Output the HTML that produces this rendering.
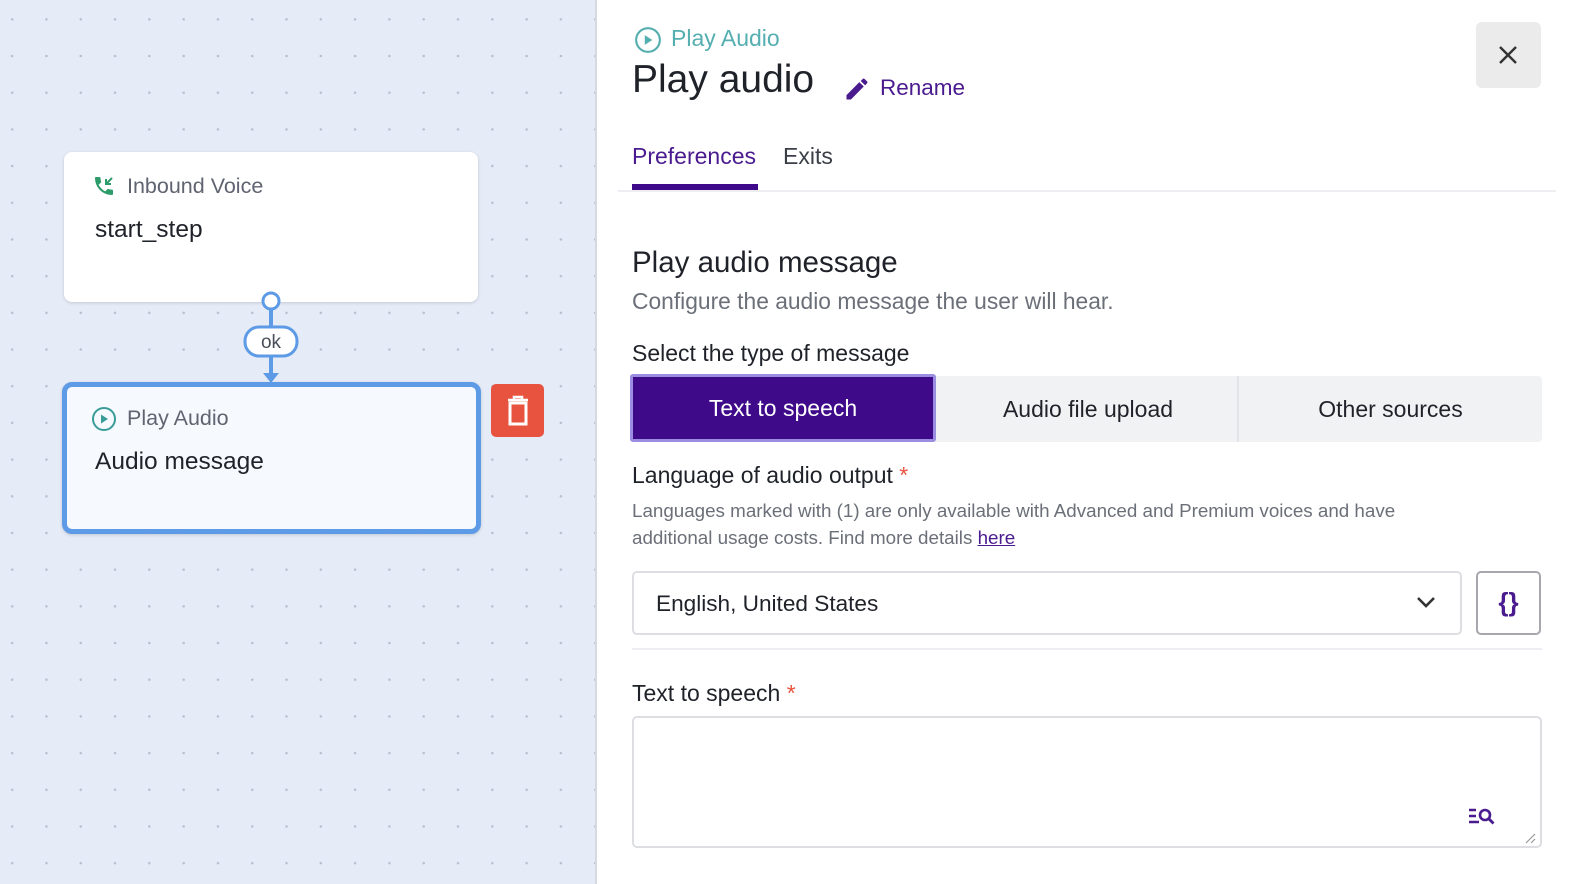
<!DOCTYPE html>
<html><head><meta charset="utf-8"><style>
*{box-sizing:border-box;margin:0;padding:0}
body{width:1584px;height:884px;overflow:hidden;font-family:"Liberation Sans",sans-serif;background:#fff;position:relative}
#canvas{position:absolute;left:0;top:0;width:597px;height:884px;background-color:#e5ebf7;background-image:radial-gradient(circle,#b7bfcf 1.1px,transparent 1.4px);background-size:34.3px 36.7px;background-position:-5px 1px;border-right:2px solid #d5d9e2}
.card{position:absolute;background:#fff;border-radius:8px;box-shadow:0 1px 3px rgba(0,0,0,.15)}
.lbl{position:absolute;font-size:21.5px;color:#5f6470}
.ttl{position:absolute;font-size:24.5px;color:#1f2229}
#panel{position:absolute;left:599px;top:0;right:0;bottom:0}
.abs{position:absolute;white-space:nowrap}
</style></head><body>
<div id="canvas">
  <div class="card" style="left:64px;top:152px;width:414px;height:150px">
    <svg class="abs" style="left:28px;top:22px" width="24" height="24" viewBox="0 0 24 24"><path fill="#2e9b6a" d="M6.6 10.8c1.4 2.8 3.8 5.1 6.6 6.6l2.2-2.2c.3-.3.7-.4 1-.2 1.1.4 2.3.6 3.6.6.6 0 1 .4 1 1V20c0 .6-.4 1-1 1C10.6 21 3 13.4 3 4c0-.6.4-1 1-1h3.5c.6 0 1 .4 1 1 0 1.3.2 2.5.6 3.6.1.3 0 .7-.2 1z"/><path stroke="#2e9b6a" stroke-width="2" fill="none" d="M20 4l-6 6M14 5v5h5"/></svg>
    <div class="lbl" style="left:63px;top:22px">Inbound Voice</div>
    <div class="ttl" style="left:31px;top:64px">start_step</div>
  </div>
  <svg class="abs" style="left:240px;top:290px" width="64" height="100">
    <line x1="31" y1="17" x2="31" y2="88" stroke="#5e9be6" stroke-width="4"/>
    <circle cx="31" cy="11" r="8" fill="#fff" stroke="#5e9be6" stroke-width="3"/>
    <rect x="5" y="37" width="52" height="29" rx="14" fill="#fff" stroke="#5e9be6" stroke-width="3"/>
    <text x="31" y="58" text-anchor="middle" font-family="Liberation Sans" font-size="19" fill="#4a4f5a">ok</text>
    <path d="M23 83h16l-8 10z" fill="#5e9be6"/>
  </svg>
  <div class="card" style="left:62px;top:382px;width:419px;height:152px;background:#f6f9fe;border:5px solid #5e9be6;border-radius:10px">
    <svg class="abs" style="left:24px;top:19px" width="26" height="26" viewBox="0 0 26 26"><circle cx="13" cy="13" r="11" fill="none" stroke="#3a9c98" stroke-width="2"/><path d="M10 8.5v9l7-4.5z" fill="#3a9c98"/></svg>
    <div class="lbl" style="left:60px;top:19px">Play Audio</div>
    <div class="ttl" style="left:28px;top:61px">Audio message</div>
  </div>
  <div class="abs" style="left:491px;top:384px;width:53px;height:53px;background:#e8533f;border-radius:5px">
    <svg class="abs" style="left:14px;top:11px" width="26" height="32" viewBox="0 0 26 32"><path d="M3 5h20M9 5V2h8v3" stroke="#fff" stroke-width="2.5" fill="none"/><rect x="5" y="8" width="16" height="21" fill="none" stroke="#fff" stroke-width="3"/></svg>
  </div>
</div>
<div id="panel">
  <svg class="abs" style="left:35px;top:26px" width="28" height="28" viewBox="0 0 26 26"><circle cx="13" cy="13" r="11" fill="none" stroke="#55aeb0" stroke-width="2"/><path d="M10 8.5v9l7-4.5z" fill="#55aeb0"/></svg>
  <div class="abs" style="left:72px;top:25px;font-size:23px;color:#55aeb0">Play Audio</div>
  <div class="abs" style="left:33px;top:58px;font-size:39px;color:#1f2229">Play audio</div>
  <svg class="abs" style="left:244px;top:75px" width="28" height="28" viewBox="0 0 24 24"><path fill="#4a1a8f" d="M3 17.2V21h3.8L17.8 9.9l-3.8-3.8zM20.7 7c.4-.4.4-1 0-1.4l-2.3-2.3c-.4-.4-1-.4-1.4 0l-1.8 1.8 3.8 3.8z"/></svg>
  <div class="abs" style="left:281px;top:75px;font-size:22.5px;color:#4a1a8f">Rename</div>
  <div class="abs" style="left:877px;top:22px;width:65px;height:66px;background:#ebebec;border-radius:6px">
    <svg class="abs" style="left:22px;top:23px" width="20" height="20"><path d="M2 2l16 16M18 2L2 18" stroke="#333" stroke-width="2.4"/></svg>
  </div>
  <div class="abs" style="left:33px;top:143px;font-size:23px;color:#4a1a8f">Preferences</div>
  <div class="abs" style="left:184px;top:143px;font-size:23px;color:#3b3f48">Exits</div>
  <div class="abs" style="left:33px;top:184px;width:126px;height:6px;background:#3f0a8a"></div>
  <div class="abs" style="left:19px;top:190px;width:938px;height:2px;background:#eceef1"></div>
  <div class="abs" style="left:33px;top:246px;font-size:29.5px;color:#1f2229">Play audio message</div>
  <div class="abs" style="left:33px;top:288px;font-size:22.8px;color:#6b6f78">Configure the audio message the user will hear.</div>
  <div class="abs" style="left:33px;top:340px;font-size:23px;color:#1f2229">Select the type of message</div>
  <div class="abs" style="left:33px;top:376px;width:910px;height:66px;background:#f1f2f4;border-radius:4px"></div>
  <div class="abs" style="left:31px;top:374px;width:306px;height:68px;background:#3f0a8a;border:3px solid #9a8ee0;border-radius:3px;color:#fff;font-size:23px;text-align:center;line-height:62px">Text to speech</div>
  <div class="abs" style="left:340px;top:376px;width:300px;height:66px;font-size:23px;text-align:center;line-height:66px;color:#1f2229;border-right:2px solid #e3e4e7">Audio file upload</div>
  <div class="abs" style="left:640px;top:376px;width:303px;height:66px;font-size:23px;text-align:center;line-height:66px;color:#1f2229">Other sources</div>
  <div class="abs" style="left:33px;top:462px;font-size:23px;color:#1f2229">Language of audio output <span style="color:#e8533f">*</span></div>
  <div class="abs" style="left:33px;top:497px;font-size:18.8px;color:#6b6f78;line-height:27px;width:820px;white-space:normal">Languages marked with (1) are only available with Advanced and Premium voices and have additional usage costs. Find more details <span style="color:#4a1a8f;text-decoration:underline">here</span></div>
  <div class="abs" style="left:33px;top:571px;width:830px;height:64px;border:2px solid #dcdee2;border-radius:5px">
    <div class="abs" style="left:22px;top:18px;font-size:22.6px;color:#1f2229">English, United States</div>
    <svg class="abs" style="left:782px;top:22px" width="20" height="14"><path d="M2 3l8 8 8-8" stroke="#333" stroke-width="2.6" fill="none"/></svg>
  </div>
  <div class="abs" style="left:877px;top:571px;width:65px;height:64px;border:2px solid #a6a8ad;border-radius:5px;color:#4a1a8f;font-size:26px;font-weight:bold;text-align:center;line-height:58px">{}</div>
  <div class="abs" style="left:33px;top:648px;width:910px;height:2px;background:#eceef1"></div>
  <div class="abs" style="left:33px;top:680px;font-size:23px;color:#1f2229">Text to speech <span style="color:#e8533f">*</span></div>
  <div class="abs" style="left:33px;top:716px;width:910px;height:132px;border:2px solid #dcdee2;border-radius:5px">
    <svg class="abs" style="left:833px;top:88px" width="30" height="22" viewBox="0 0 30 22"><path d="M2 4h7M2 10h7M2 16h10" stroke="#4a1a8f" stroke-width="2.6"/><circle cx="18" cy="9" r="5" fill="none" stroke="#4a1a8f" stroke-width="2.6"/><path d="M21.5 12.5l5 5" stroke="#4a1a8f" stroke-width="2.8"/></svg>
    <svg class="abs" style="left:890px;top:114px" width="12" height="12"><path d="M11 2L2 11M11 7L7 11" stroke="#999" stroke-width="1.2"/></svg>
  </div>
</div>
</body></html>
